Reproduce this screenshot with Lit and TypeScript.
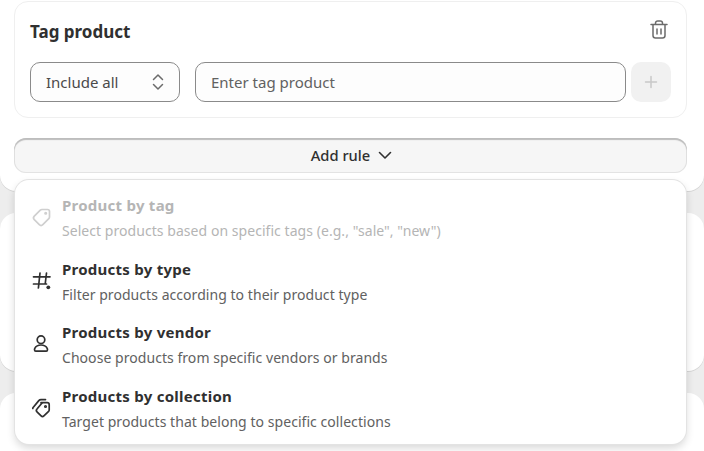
import { LitElement, html, css, svg } from 'lit';
import { customElement } from 'lit/decorators.js';

const tagIcon = svg`<path d="M12 3.500h5.500a2 2 0 0 1 2 2V11a2.500 2.500 0 0 1-.7 1.700l-6 6a2.500 2.500 0 0 1-3.500 0l-5-5a2.500 2.500 0 0 1 0-3.500l6-6A2.500 2.500 0 0 1 12 3.500Z"/><circle cx="15.700" cy="7.300" r=".7"/>`;
const hashIcon = svg`<path d="M10 3 8.400 18M16.500 3 15.200 14M3.500 6.800H20M3.500 14h13"/><circle cx="18.300" cy="17.300" r="1.900" fill="currentColor" stroke="none"/>`;
const personIcon = svg`<circle cx="11" cy="6.700" r="3.800"/><path d="M4.500 16.800c0-.6.100-1.100.4-1.600 1-2 3.400-3.200 6.100-3.200s5.100 1.200 6.100 3.200c.3.500.4 1 .4 1.600 0 .8-.6 1.400-1.300 1.400H5.800c-.7 0-1.300-.6-1.300-1.400Z"/>`;
const collectionIcon = svg`<path d="M11 5.700h6.200a2 2 0 0 1 2 2v5.300a2 2 0 0 1-.6 1.400l-4.700 4.500a2 2 0 0 1-2.800 0l-4.100-4.100a2 2 0 0 1 0-2.800l4.600-5.500a2 2 0 0 1 1.400-.8Z"/><path d="M2.800 11.500c0-.4.100-.7.300-1L8.800 3.600a3 3 0 0 1 2.200-1h4.500"/><circle cx="15.500" cy="9.500" r=".7"/>`;

const items = [
  { title: 'Product by tag', text: 'Select products based on specific tags (e.g., "sale", "new")', icon: tagIcon, off: true },
  { title: 'Products by type', text: 'Filter products according to their product type', icon: hashIcon, off: false },
  { title: 'Products by vendor', text: 'Choose products from specific vendors or brands', icon: personIcon, off: false },
  { title: 'Products by collection', text: 'Target products that belong to specific collections', icon: collectionIcon, off: false },
];

@customElement('app-root')
export class AppRoot extends LitElement {
  static styles = css`
    :host {
      display: block;
      width: 704px;
      height: 451px;
      overflow: hidden;
      position: relative;
      background: #ededed;
      font-family: 'Noto Sans', 'Open Sans', sans-serif;
      font-size: 14px;
      color: #303030;
    }

    .panel {
      background: #fff;
      border-radius: 0 0 16px 16px;
      height: 191px;
      padding: 1px 17px 0 14px;
      box-sizing: border-box;
      box-shadow: 0 1px 0 #d6d6d6;
    }

    .panel.middle {
      height: 158px;
      margin-top: 22px;
      border-radius: 16px;
      padding: 0;
    }

    .panel.last {
      height: 60px;
      margin-top: 22px;
      border-radius: 16px 16px 0 0;
      box-shadow: none;
      padding: 0;
    }

    .card {
      height: 117px;
      box-sizing: border-box;
      border: 1px solid #efefef;
      border-radius: 14px;
      padding: 15px 15px 0;
    }

    .card-head {
      display: flex;
      justify-content: space-between;
      align-items: center;
      height: 28px;
    }

    .card-head h2 {
      margin: 0;
      font-size: 17px;
      font-weight: 700;
      color: #303030;
    }

    .trash {
      width: 22px;
      height: 22px;
      color: #6b6b6b;
      margin: 0 1px 3px 0;
    }

    .controls {
      display: flex;
      gap: 5px;
      margin-top: 17px;
    }

    .select,
    .input {
      height: 40px;
      box-sizing: border-box;
      border: 1px solid #8a8a8a;
      border-radius: 10px;
      background: #fdfdfd;
      display: flex;
      align-items: center;
      padding: 0 15px;
      font-size: 15px;
      color: #616161;
    }

    .select {
      width: 150px;
      margin-right: 10px;
      justify-content: space-between;
      padding-right: 13px;
      color: #4a4a4a;
    }

    .select svg {
      width: 16px;
      height: 20px;
      margin-top: -1px;
      color: #6b6b6b;
    }

    .input {
      flex: 1;
    }

    .plus {
      width: 40px;
      height: 40px;
      border-radius: 10px;
      background: #f1f1f1;
      display: flex;
      align-items: center;
      justify-content: center;
      color: #c8c8c8;
    }

    .plus svg {
      width: 16px;
      height: 16px;
    }

    .add-rule {
      margin-top: 20px;
      height: 35px;
      box-sizing: border-box;
      padding: 0 0 2px 3px;
      border-radius: 12px;
      background: #f6f6f6;
      box-shadow: inset 0 2px 1px #bdbdbd, inset 0 0 0 1px #e3e3e3;
      display: flex;
      align-items: center;
      justify-content: center;
      gap: 7px;
      font-size: 14.700px;
      font-weight: 500;
      color: #303030;
    }

    .add-rule svg {
      width: 16px;
      height: 16px;
    }

    .menu {
      position: absolute;
      left: 15px;
      top: 180px;
      width: 671px;
      height: 264px;
      box-sizing: border-box;
      background: #fff;
      border-radius: 14px;
      box-shadow: 0 0 0 1px #e3e3e3, 0 4px 8px rgba(0, 0, 0, 0.16);
      padding: 7px 0 0;
    }

    .item {
      display: flex;
      align-items: center;
      height: 63.600px;
    }

    .item svg {
      width: 22px;
      height: 22px;
      margin: -3px 10px 0 15px;
      flex: none;
      fill: none;
      color: #303030;
      stroke: currentColor;
      stroke-width: 1.700;
      stroke-linecap: round;
      stroke-linejoin: round;
    }

    .item.off svg {
      color: #cfcfcf;
    }

    .title {
      font-size: 15px;
      font-weight: 700;
      letter-spacing: 0.25px;
      line-height: 24px;
      color: #303030;
    }

    .text {
      line-height: 27px;
      letter-spacing: 0.05px;
      color: #616161;
    }

    .item.off .title,
    .item.off .text {
      color: #b5b5b5;
    }
  `;

  render() {
    return html`
      <div class="panel">
        <div class="card">
          <div class="card-head">
            <h2>Tag product</h2>
            <svg class="trash" viewBox="0 0 22 22" fill="none" stroke="currentColor" stroke-width="1.500" stroke-linecap="round" stroke-linejoin="round">
              <path d="M3 5.500h16M7.500 5.500V4.200a2.200 2.200 0 0 1 2.200-2.200h2.600a2.200 2.200 0 0 1 2.200 2.200v1.300M5 5.500v11a2.500 2.500 0 0 0 2.500 2.500h7a2.500 2.500 0 0 0 2.500-2.500v-11M9 10v5M13 10v5"/>
            </svg>
          </div>
          <div class="controls">
            <div class="select">
              <span>Include all</span>
              <svg viewBox="0 0 16 20" fill="none" stroke="currentColor" stroke-width="1.500" stroke-linecap="round" stroke-linejoin="round">
                <path d="m3.500 7.500 4.500-4.500 4.500 4.500M3.500 12.500l4.500 4.500 4.500-4.500"/>
              </svg>
            </div>
            <div class="input">Enter tag product</div>
            <div class="plus">
              <svg viewBox="0 0 16 16" fill="none" stroke="currentColor" stroke-width="1.500" stroke-linecap="round">
                <path d="M8 2.500v11M2.500 8h11"/>
              </svg>
            </div>
          </div>
        </div>
        <div class="add-rule">
          <span>Add rule</span>
          <svg viewBox="0 0 16 16" fill="none" stroke="currentColor" stroke-width="1.600" stroke-linecap="round" stroke-linejoin="round">
            <path d="m2.500 5.500 5.500 5.500 5.500-5.500"/>
          </svg>
        </div>
      </div>
      <div class="panel middle"></div>
      <div class="panel last"></div>
      <div class="menu">
        ${items.map(
          (item) => html`
            <div class="item ${item.off ? 'off' : ''}">
              <svg viewBox="0 0 22 22">${item.icon}</svg>
              <div>
                <div class="title">${item.title}</div>
                <div class="text">${item.text}</div>
              </div>
            </div>
          `
        )}
      </div>
    `;
  }
}
